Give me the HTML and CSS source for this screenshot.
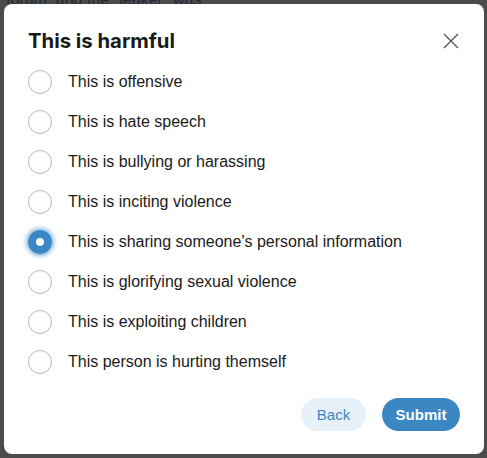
FILE: index.html
```html
<!DOCTYPE html>
<html lang="en">
<head>
    <meta charset="UTF-8">
    <meta name="viewport" content="width=device-width, initial-scale=1.0">
    <link rel="stylesheet" href="styles.css">
    <title>Report</title>
</head>
<body>
    <p class="behind">forum, and the "leaker" was</p>
    <div class="overlay">
        <div class="modal">
            <div class="head">
                <h1>This is harmful</h1>
                <svg class="close" width="16" height="16" viewBox="0 0 16 16">
                    <path d="M1 1 L15 15 M15 1 L1 15" stroke="#555" stroke-width="1.4" fill="none"/>
                </svg>
            </div>
            <ul class="options">
                <li><span class="radio"></span>This is offensive</li>
                <li><span class="radio"></span>This is hate speech</li>
                <li><span class="radio"></span>This is bullying or harassing</li>
                <li><span class="radio"></span>This is inciting violence</li>
                <li><span class="radio checked"></span>This is sharing someone's personal information</li>
                <li><span class="radio"></span>This is glorifying sexual violence</li>
                <li><span class="radio"></span>This is exploiting children</li>
                <li><span class="radio"></span>This person is hurting themself</li>
            </ul>
            <div class="actions">
                <button class="btn back">Back</button>
                <button class="btn submit">Submit</button>
            </div>
        </div>
    </div>
</body>
</html>
```

FILE: styles.css
```css
body {
    margin: 0;
    background-color: #4b4b4b;
    font-family: "Liberation Sans", Arial, sans-serif;
    position: relative;
    height: 458px;
    overflow: hidden;
}
.behind {
    position: absolute;
    top: -9px;
    left: 6px;
    margin: 0;
    font-size: 16px;
    color: #1f2b38;
}
.overlay {
    position: absolute;
    top: 0;
    left: 0;
    right: 0;
    bottom: 0;
    padding: 4px 3px 4px 4px;
}
.modal {
    background: #ffffff;
    border-radius: 8px;
    height: 450px;
    box-sizing: border-box;
    padding: 24px 24px 0 24px;
    display: flex;
    flex-direction: column;
}
.head {
    display: flex;
    justify-content: space-between;
    align-items: center;
    height: 24px;
}
h1 {
    margin: 0;
    font-family: Inter, sans-serif;
    font-weight: 700;
    font-size: 20.3px;
    color: #1a1a1a;
    letter-spacing: 0;
}
.close {
    margin-right: 1px;
    margin-top: 1px;
}
.options {
    list-style: none;
    margin: 10px 0 0 0;
    padding: 0;
}
.options li {
    height: 40px;
    display: flex;
    align-items: center;
    gap: 16px;
    font-size: 16px;
    color: #1a1a1a;
}
.radio {
    width: 24px;
    height: 24px;
    box-sizing: border-box;
    border: 1.5px solid #b9b6b2;
    border-radius: 50%;
    flex-shrink: 0;
}
.radio.checked {
    border: none;
    background: radial-gradient(circle, #ffffff 0 3.5px, #3a87c4 4.5px);
    box-shadow: 0 0 4px 2px rgba(58, 135, 196, 0.6);
}
.actions {
    display: flex;
    justify-content: flex-end;
    gap: 16px;
    margin-top: 16px;
}
.btn {
    height: 33px;
    border: none;
    border-radius: 17px;
    font-family: "Liberation Sans", Arial, sans-serif;
    font-size: 15px;
    padding: 0;
}
.back {
    width: 65px;
    background: #e6f1fa;
    color: #3a87c4;
}
.submit {
    width: 78px;
    background: #3a87c4;
    color: #ffffff;
    font-weight: bold;
}
```
